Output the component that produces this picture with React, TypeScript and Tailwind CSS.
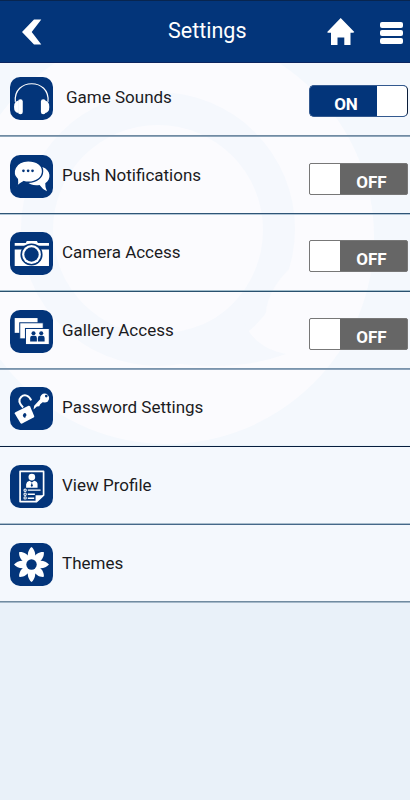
import React from "react";

const NAVY = "#03357a";

function IconBox({ children }: { children: React.ReactNode }) {
  return (
    <svg viewBox="0 0 128 128" className="h-[43px] w-[43px] shrink-0">
      <rect width="128" height="128" rx="30" fill={NAVY} />
      {children}
    </svg>
  );
}

const Headphones = () => (
  <IconBox>
    <path d="M16 74C8 2 121 2 113 74" fill="none" stroke="#fff" strokeWidth="3.5" />
    <rect x="24" y="66" width="14" height="45" rx="7" fill="#fff" />
    <path d="M25 70Q12 72 12 89T25 107Z" fill="#fff" />
    <rect x="92" y="66" width="14" height="45" rx="7" fill="#fff" />
    <path d="M104 70Q117 72 117 89T104 107Z" fill="#fff" />
  </IconBox>
);

const Chat = () => (
  <IconBox>
    <path d="M96 36C122 44 124 73 105 84Q104 97 110 108Q96 101 88 89C72 92 57 87 50 79Z" fill="#fff" />
    <path d="M54 17C80 17 97 30 97 48S80 81 54 81Q47 81 41 79Q31 84 20 94Q24 83 22 72C2 54 15 17 54 17Z" fill="#fff" stroke={NAVY} strokeWidth="4" />
    <circle cx="40" cy="47" r="4" fill={NAVY} />
    <circle cx="54" cy="47" r="4" fill={NAVY} />
    <circle cx="67" cy="47" r="4" fill={NAVY} />
  </IconBox>
);

const Camera = () => (
  <IconBox>
    <path d="M14 33H47L50 27H80L83 33H116V41H14Z" fill="#fff" />
    <path d="M14 52H116V101H14Z" fill="#fff" />
    <circle cx="64" cy="67" r="33" fill={NAVY} />
    <circle cx="64" cy="67" r="28" fill="#fff" />
    <circle cx="64" cy="67" r="21.5" fill={NAVY} />
  </IconBox>
);

const Gallery = () => (
  <IconBox>
    <rect x="14" y="24" width="68" height="44" fill="#fff" />
    <rect x="29" y="38" width="70" height="48" fill="#fff" stroke={NAVY} strokeWidth="3" />
    <rect x="46" y="55" width="71" height="48" fill="#fff" stroke={NAVY} strokeWidth="3" />
    <g fill={NAVY}>
      <circle cx="70" cy="69" r="6" />
      <path d="M60 94V83Q60 77 66 77H74Q80 77 80 83V94Z" />
      <circle cx="93" cy="69" r="6" />
      <path d="M83 94V83Q83 77 89 77H97Q103 77 103 83V94Z" />
    </g>
  </IconBox>
);

const Password = () => (
  <IconBox>
    <path d="M16 75L55 56Q58 55 60 58L72 86Q73 89 70 91L36 109Q33 110 31 107L14 79Q13 77 16 75Z" fill="#fff" />
    <path d="M39 61C27 49 25 38 33 30C43 20 57 25 63 40" fill="none" stroke="#fff" strokeWidth="6" />
    <path d="M41 79a5 5 0 0 1 6 8l-2 5-5-3-2-5z" fill={NAVY} />
    <circle cx="103" cy="33" r="13.5" fill="#fff" />
    <path d="M91 35L99 44L90 51L87 57L80 58L70 67L72 56Z" fill="#fff" />
    <circle cx="108" cy="27" r="4" fill={NAVY} />
  </IconBox>
);

const Profile = () => (
  <IconBox>
    <path d="M30 19H100V90L79 109H30Z" fill="none" stroke="#fff" strokeWidth="5" strokeLinejoin="round" />
    <path d="M76 111V90H101Z" fill="#fff" />
    <circle cx="65" cy="36" r="10" fill="#fff" />
    <path d="M48 68V57Q49 50 58 47L65 52L72 47Q82 50 82 57V68Z" fill="#fff" />
    <path d="M65 52L62 61L65 66L68 61Z" fill={NAVY} />
    <path d="M53 75H91M53 87H74M53 99H72" stroke="#fff" strokeWidth="4" />
    <g fill="none" stroke="#fff" strokeWidth="3">
      <circle cx="45" cy="75" r="3.5" />
      <circle cx="45" cy="87" r="3.5" />
      <circle cx="45" cy="98" r="3.5" />
    </g>
  </IconBox>
);

const Flower = () => (
  <IconBox>
    {[0, 45, 90, 135, 180, 225, 270, 315].map((a) => (
      <path key={a} d="M55 50C50 35 54 20 64 12C74 20 78 35 73 50Z" fill="#fff" transform={`rotate(${a} 64 64)`} />
    ))}
    <circle cx="64" cy="64" r="26" fill="#fff" />
    <circle cx="64" cy="64" r="15.5" fill={NAVY} />
  </IconBox>
);

function Toggle({ on }: { on: boolean }) {
  return on ? (
    <div className="mb-[18px] flex h-8 w-[99px] overflow-hidden rounded-[5px] border border-[#33598f] border-r-[#0a1d3a] bg-[#03357a]">
      <span className="flex-1 pt-[6px] pl-[5px] text-center text-[17px] leading-6 font-bold text-white">ON</span>
      <span className="w-[30px] rounded-r-[3px] bg-white" />
    </div>
  ) : (
    <div className="mb-[18px] flex h-8 w-[99px] overflow-hidden rounded-[2px] border border-[#777] bg-[#666]">
      <span className="w-[30px] bg-white" />
      <span className="flex-1 pt-[6px] pr-[4px] text-center text-[17px] leading-6 font-bold text-white">OFF</span>
    </div>
  );
}

const rows = [
  { label: "Game Sounds", Icon: Headphones, on: true, size: "h-[74px]", gap: "ml-[13px]", l1: "bg-[#718ba3]", l2: "bg-[#8fa6ba]" },
  { label: "Push Notifications", Icon: Chat, on: false, size: "h-[78px]", gap: "ml-[9px]", l1: "bg-[#2f5577]", l2: "bg-[#b2c6d6]" },
  { label: "Camera Access", Icon: Camera, on: false, size: "h-[77px]", gap: "ml-[9px]", l1: "bg-[#a2bdcb]", l2: "bg-[#29516f]" },
  { label: "Gallery Access", Icon: Gallery, on: false, size: "h-[78px]", gap: "ml-[9px]", l1: "bg-[#7a94ac]", l2: "bg-[#8ca3ba]" },
  { label: "Password Settings", Icon: Password, size: "h-[77px]", gap: "ml-[9px]", l1: "bg-[#eaf4fa]", l2: "bg-[#071d3e]" },
  { label: "View Profile", Icon: Profile, size: "h-[78px]", gap: "ml-[9px]", l1: "bg-[#a9bdcc]", l2: "bg-[#456889]" },
  { label: "Themes", Icon: Flower, size: "h-[78px]", gap: "ml-[9px]", l1: "bg-[#718ba0]", l2: "bg-[#a4b8c9]" },
];

function Watermark() {
  return (
    <svg viewBox="0 0 410 540" className="absolute inset-0 h-[540px] w-[410px]">
      <circle cx="167" cy="174" r="207" fill="#fbfbfe" />
      <circle cx="158" cy="166" r="137" fill="#f5f8fd" />
      <circle cx="158" cy="167" r="105" fill="#fbfbfe" />
      <path d="M241 232C238 262 254 285 286 291Q240 308 180 301L150 272Q214 269 241 232Z" fill="#f5f8fd" />
      <path d="M290 205C262 232 255 268 286 291Q330 275 340 235Z" fill="#fbfbfe" />
    </svg>
  );
}

export default function App() {
  return (
    <div className="flex h-[800px] w-[410px] flex-col overflow-hidden bg-[#e9f1f9] font-[Roboto,'Liberation_Sans',sans-serif]">
      <header className="flex h-[63px] shrink-0 items-center border-t border-b border-t-[#08254f] border-b-[#0b2560] bg-[#03357a]">
        <svg viewBox="0 0 20 26" className="ml-[22px] h-[26px] w-5 shrink-0">
          <path d="M12 .5H19.3L9.7 13L19.3 25.5H12L0 13Z" fill="#fff" />
        </svg>
        <h1 className="ml-[126px] w-[80px] pb-px text-[21.5px] leading-7 whitespace-nowrap text-white">Settings</h1>
        <svg viewBox="0 0 28 28" className="ml-[79px] h-7 w-7 shrink-0">
          <path d="M13.7 0L27.3 14Q27 15 25 14.8H23.5V27H17.3V19.5H10.5V27H4V14.8H1.5Q.2 15 .2 14Z" fill="#fff" />
        </svg>
        <div className="ml-[25px] flex flex-col gap-[1.5px] pt-[3px]">
          <span className="h-[6.3px] w-[23px] rounded-[2px] bg-white" />
          <span className="h-[6.3px] w-[23px] rounded-[2px] bg-white" />
          <span className="h-[6.3px] w-[23px] rounded-[2px] bg-white" />
        </div>
      </header>
      <main className="relative shrink-0 overflow-hidden bg-[#f4f8fd]">
        <Watermark />
        <ul className="relative">
          {rows.map(({ label, Icon, on, size, gap, l1, l2 }) => (
            <li key={label} className={`flex flex-col justify-end ${size}`}>
              <div className="flex items-end pr-[2px] pl-[10px]">
                <div className="mb-[15px] shrink-0">
                  <Icon />
                </div>
                <span className={`mb-[26px] flex-1 text-[17px] leading-6 whitespace-nowrap text-[#1b1b1e] ${gap}`}>{label}</span>
                {on !== undefined && <Toggle on={on} />}
              </div>
              <div className={`h-px ${l1}`} />
              <div className={`h-px ${l2}`} />
            </li>
          ))}
        </ul>
      </main>
    </div>
  );
}
